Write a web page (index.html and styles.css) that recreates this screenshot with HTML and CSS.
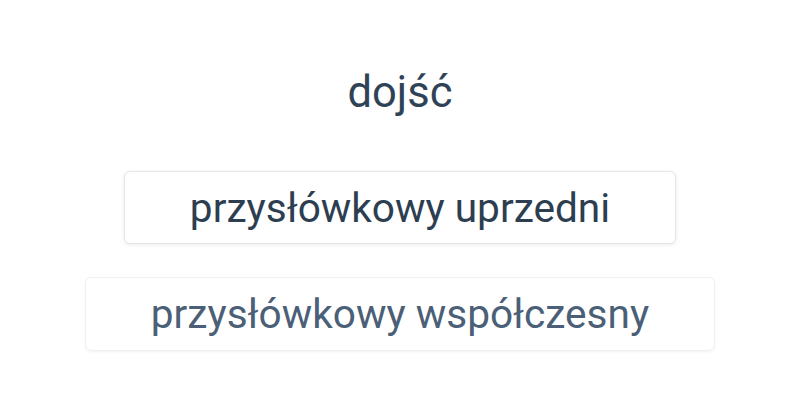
FILE: index.html
```html
<!DOCTYPE html>
<html lang="pl">
<head>
    <meta charset="UTF-8">
    <title>dojść</title>
    <link rel="stylesheet" href="styles.css">
</head>
<body>
    <div class="quiz">
        <h2 class="word">dojść</h2>
        <div class="options">
            <button class="option">przysłówkowy uprzedni</button>
            <button class="option option-muted">przysłówkowy współczesny</button>
        </div>
    </div>
</body>
</html>
```

FILE: styles.css
```css
* {
    margin: 0;
    padding: 0;
    box-sizing: border-box;
}

body {
    background: #fff;
    font-family: Roboto, "Noto Sans", sans-serif;
    color: #2c3e50;
    height: 400px;
}

.quiz {
    display: flex;
    flex-direction: column;
    align-items: center;
    padding-top: 66px;
}

.word {
    font-size: 43.5px;
    font-weight: 400;
    line-height: 54px;
    color: #2f4357;
    margin-bottom: 51px;
}

.options {
    display: flex;
    flex-direction: column;
    align-items: center;
    gap: 33px;
}

.option {
    font-family: inherit;
    font-size: 40.6px;
    color: #2c3e50;
    background: #fff;
    border: 1px solid #e3e6ea;
    border-radius: 6px;
    padding: 0 65px;
    height: 73px;
    box-shadow: 0 1px 4px rgba(0, 0, 0, 0.08);
}

.option-muted {
    height: 74px;
    color: #4b5f77;
    border-color: #eef0f2;
    box-shadow: 0 1px 3px rgba(0, 0, 0, 0.05);
}
```
